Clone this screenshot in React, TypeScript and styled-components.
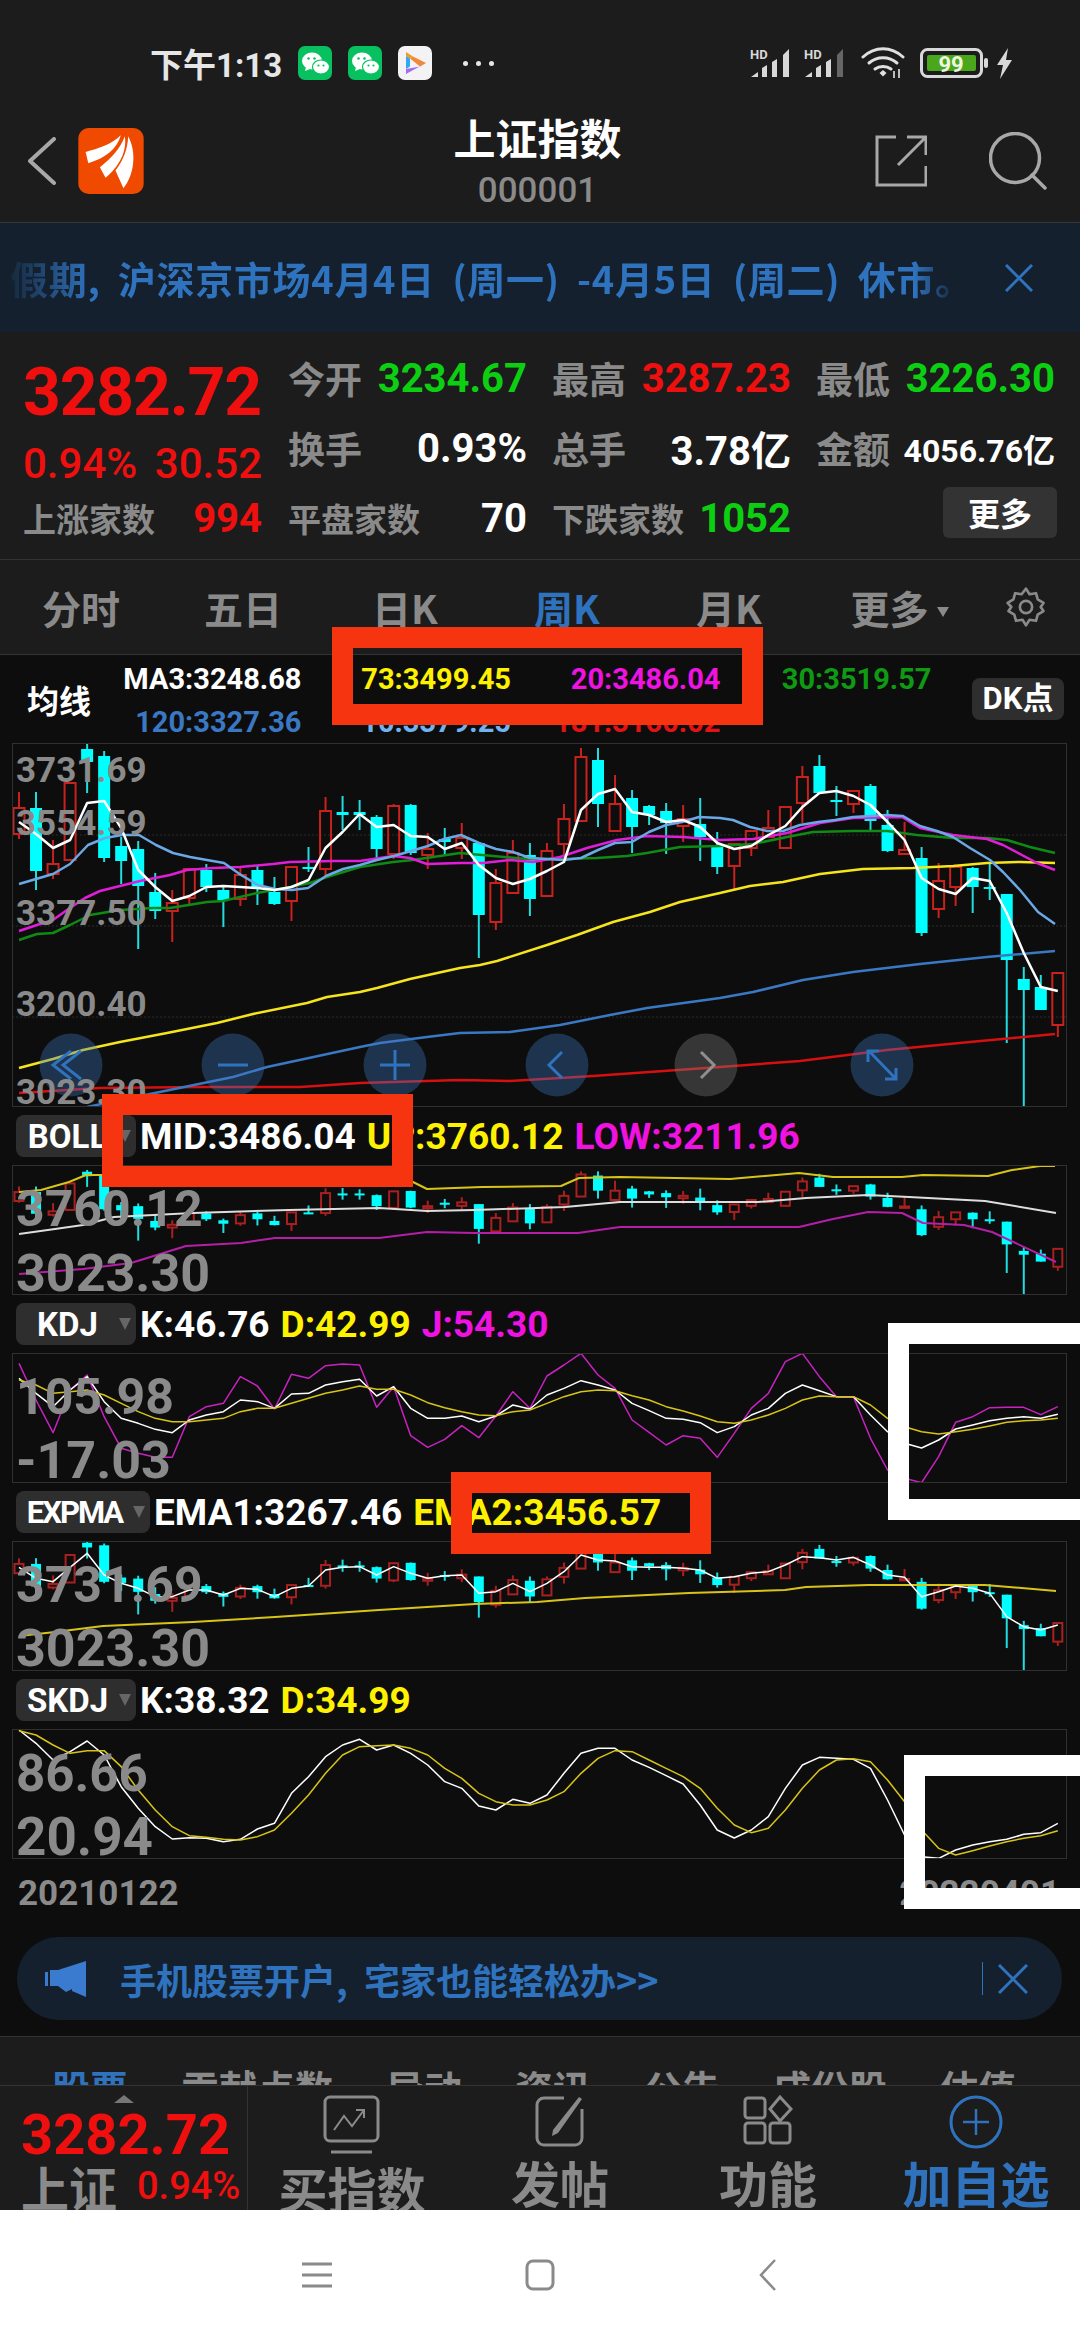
import React from 'react';
import styled, {createGlobalStyle} from 'styled-components';

const NUM = `Roboto, "Noto Sans CJK SC", sans-serif`;
const CJK = `"Noto Sans CJK SC", Roboto, sans-serif`;
const RED = '#f00f0f';
const GREEN = '#0ccf12';
const GRAY = '#8a8a8a';
const BLUE = '#2f72bd';
const YELLOW = '#fff200';
const MAGENTA = '#f012e0';

const GlobalStyle = createGlobalStyle`
  html, body { margin: 0; padding: 0; background: #fff; }
  * { box-sizing: border-box; }
`;

const Page = styled.div`
  position: relative;
  width: 1080px;
  height: 2340px;
  overflow: hidden;
  background: #1c1c1c;
  font-family: ${CJK};
`;

const StatusBar = styled.div`
  display: flex;
  align-items: center;
  height: 100px;
  padding: 26px 67px 0 150px;
`;
const Clock = styled.span`
  font: 700 33px ${NUM};
  color: #e6e6e6;
  width: 131px;
  white-space: nowrap;
  margin-right: 17px;
`;
const AppIcons = styled.div`
  display: flex;
  gap: 16px;
`;
const MoreDots = styled.div`
  display: flex;
  gap: 8px;
  margin-left: 31px;
  i {
    width: 5px;
    height: 5px;
    border-radius: 50%;
    background: #e6e6e6;
  }
`;
const SysIcons = styled.div`
  display: flex;
  align-items: center;
  margin-left: auto;
  gap: 13px;
`;

const NavBar = styled.div`
  display: grid;
  grid-template-columns: 1fr auto 1fr;
  align-items: center;
  height: 123px;
  padding: 0 33px 0 28px;
  border-bottom: 1px solid #34383c;
`;
const NavLeft = styled.div`
  display: flex;
  align-items: center;
  gap: 22px;
`;
const NavTitle = styled.div`
  display: flex;
  flex-direction: column;
  align-items: center;
`;
const TitleText = styled.div`
  font: 700 42px/52px ${CJK};
  color: #fff;
`;
const CodeText = styled.div`
  font: 500 35px/40px ${NUM};
  color: ${GRAY};
  margin-top: 8px;
`;
const NavRight = styled.div`
  display: flex;
  justify-content: flex-end;
  align-items: center;
  gap: 62px;
`;

const Notice = styled.div`
  display: flex;
  align-items: center;
  height: 109px;
  background: #14202e;
`;
const NoticeText = styled.div`
  flex: 1;
  min-width: 0;
  font: 700 38px ${CJK};
  letter-spacing: 0.7px;
  word-spacing: 8px;
  color: ${BLUE};
  white-space: nowrap;
  padding-left: 10px;
  mask-image: linear-gradient(90deg, transparent 0, #000 90px, #000 915px, transparent 960px);
`;
const NoticeClose = styled.div`
  flex: none;
  width: 122px;
  display: flex;
  justify-content: center;
`;

const Quote = styled.div`
  display: flex;
  height: 228px;
  padding-left: 23px;
  border-bottom: 1px solid #333;
`;
const PriceCol = styled.div`
  width: 239px;
  padding-top: 26px;
  margin-right: 26px;
`;
const BigPrice = styled.div`
  font: 700 66px/70px ${NUM};
  letter-spacing: -1.2px;
  color: ${RED};
  white-space: nowrap;
`;
const Change = styled.div`
  display: flex;
  justify-content: space-between;
  height: 55px;
  padding-top: 16px;
  font: 500 42px/39px ${NUM};
  color: ${RED};
`;
const StatGrid = styled.div`
  display: grid;
  grid-template-columns: repeat(3, 239px);
  grid-auto-rows: 70px;
  column-gap: 25px;
  padding-top: 11px;
`;
const Stat = styled.div`
  display: flex;
  align-items: center;
  justify-content: space-between;
  height: 70px;
`;
const StatLabel = styled.span<{$size?: number}>`
  font: 700 ${p => p.$size ?? 37}px ${CJK};
  color: ${GRAY};
  white-space: nowrap;
`;
const StatValue = styled.span<{$color?: string; $size?: number}>`
  font: 700 ${p => p.$size ?? 40}px ${NUM};
  color: ${p => p.$color ?? '#fff'};
  white-space: nowrap;
`;
const MoreButton = styled.div`
  position: absolute;
  left: 943px;
  top: 487px;
  width: 114px;
  height: 51px;
  border-radius: 6px;
  background: #333;
  color: #fff;
  font: 700 32px/51px ${CJK};
  text-align: center;
`;

const PeriodTabs = styled.div`
  display: flex;
  align-items: center;
  height: 95px;
  border-bottom: 1px solid #333;
`;
const PeriodTab = styled.div<{$active?: boolean}>`
  width: 162px;
  text-align: center;
  white-space: nowrap;
  font: 700 39px ${CJK};
  color: ${p => (p.$active ? BLUE : GRAY)};
`;
const MoreTab = styled(PeriodTab)`
  width: 195px;
  padding-right: 16px;
`;

const ChartArea = styled.div`
  background: #0d0d0d;
  height: 1381px;
`;
const MaLegend = styled.div`
  position: relative;
  display: flex;
  height: 88px;
  padding-left: 27px;
`;
const MaTitle = styled.div`
  width: 65px;
  align-self: center;
  font: 700 32px ${CJK};
  color: #fff;
  white-space: nowrap;
`;
const MaGrid = styled.div`
  display: grid;
  grid-template-columns: repeat(3, 209.5px) 211px;
  grid-auto-rows: 43px;
  padding-top: 3px;
`;
const MaValue = styled.div<{$color: string}>`
  font: 700 29px/43px ${NUM};
  color: ${p => p.$color};
  text-align: right;
  white-space: nowrap;
`;
const DkButton = styled.div`
  position: absolute;
  left: 972px;
  top: 23px;
  width: 92px;
  height: 42px;
  border-radius: 8px;
  background: #2e2e2e;
  color: #fff;
  font: 700 31px/42px ${NUM};
  text-align: center;
  white-space: nowrap;
`;

const Panel = styled.div<{$height: number}>`
  position: relative;
  margin: 0 13px 0 12px;
  height: ${p => p.$height}px;
  outline: 1px solid #303030;
  outline-offset: -1px;
  svg {
    display: block;
    width: 100%;
    height: 100%;
  }
`;
const AxisLabel = styled.span<{$center: number; $size: number}>`
  position: absolute;
  left: 4px;
  top: ${p => p.$center}px;
  transform: translateY(-50%);
  font: 700 ${p => p.$size}px ${NUM};
  color: #8a8a8a;
  white-space: nowrap;
`;

const IndicatorHeader = styled.div`
  display: flex;
  align-items: center;
  height: 58px;
  padding: 0 0 0 16px;
`;
const Chip = styled.div<{$wide?: boolean}>`
  display: flex;
  align-items: center;
  width: ${p => (p.$wide ? 134 : 120)}px;
  height: 42px;
  padding-right: 5px;
  margin-right: 4px;
  border-radius: 8px;
  background: #2e2e2e;
  color: #fff;
  &::after {
    content: '';
    flex: none;
    border-left: 6px solid transparent;
    border-right: 6px solid transparent;
    border-top: 12px solid #666;
  }
`;
const ChipText = styled.span<{$tight?: boolean}>`
  flex: 1;
  text-align: center;
  font: 700 ${p => (p.$tight ? 31 : 33)}px ${NUM};
  letter-spacing: ${p => (p.$tight ? -2 : 0)}px;
  white-space: nowrap;
`;
const Legend = styled.span<{$color: string}>`
  font: 700 37px ${NUM};
  color: ${p => p.$color};
  margin-right: 11px;
  white-space: nowrap;
`;

const DateRow = styled.div`
  display: flex;
  justify-content: space-between;
  align-items: center;
  height: 68px;
  padding: 0 20px 0 18px;
  font: 700 35px ${NUM};
  color: ${GRAY};
`;
const Promo = styled.div`
  display: flex;
  align-items: center;
  height: 83px;
  margin: 10px 18px 0 17px;
  padding: 0 34px 0 28px;
  border-radius: 42px;
  background: #14202e;
`;
const PromoText = styled.div`
  flex: 1;
  margin-left: 33px;
  font: 700 36px ${CJK};
  color: ${BLUE};
  white-space: pre;
`;
const PromoDivider = styled.div`
  width: 1px;
  height: 33px;
  background: ${BLUE};
  margin-right: 15px;
`;

const StockTabs = styled.div`
  display: flex;
  gap: 53px;
  height: 49px;
  padding: 30px 0 0 52px;
  overflow: hidden;
  border-top: 1px solid #333;
`;
const StockTab = styled.div<{$active?: boolean}>`
  font: 700 38px/40px ${CJK};
  color: ${p => (p.$active ? BLUE : GRAY)};
  white-space: nowrap;
`;

const BottomBar = styled.div`
  display: flex;
  height: 125px;
  overflow: hidden;
  border-top: 1px solid #333;
  background: #1c1c1c;
`;
const IndexCell = styled.div`
  position: relative;
  width: 248px;
  padding: 26px 0 0 21px;
  border-right: 1px solid #333;
`;
const UpMark = styled.i`
  position: absolute;
  left: 114px;
  top: 9px;
  border-left: 10px solid transparent;
  border-right: 10px solid transparent;
  border-bottom: 8px solid #777;
`;
const IndexPrice = styled.div`
  font: 700 56px/46px ${NUM};
  color: ${RED};
  white-space: nowrap;
`;
const IndexRow = styled.div`
  display: flex;
  align-items: center;
  gap: 20px;
  white-space: nowrap;
  margin-top: 2px;
`;
const IndexName = styled.span`
  font: 700 48px/52px ${CJK};
  color: ${GRAY};
`;
const IndexPct = styled.span`
  font: 500 38px ${NUM};
  color: ${RED};
`;
const ActionItem = styled.div<{$active?: boolean}>`
  width: 208px;
  display: flex;
  flex-direction: column;
  align-items: center;
  color: ${p => (p.$active ? BLUE : GRAY)};
`;
const ActionIcon = styled.div`
  height: 79px;
  padding-top: 9px;
`;
const ActionLabel = styled.div`
  font: 700 49px/56px ${CJK};
  white-space: nowrap;
`;

const SystemNav = styled.div`
  display: flex;
  align-items: center;
  gap: 193px;
  height: 130px;
  padding-left: 302px;
  background: #fff;
  svg:last-child {
    margin-left: 11px;
  }
`;

const Annotation = styled.div<{$x: number; $y: number; $w: number; $h: number; $color: string}>`
  position: absolute;
  left: ${p => p.$x}px;
  top: ${p => p.$y}px;
  width: ${p => p.$w}px;
  height: ${p => p.$h}px;
  border: 21px solid ${p => p.$color};
`;

// [bodyTop, bodyBottom, wickTop, wickBottom, up] in main-chart page coordinates
type Candle = [number, number, number, number, 0 | 1];
const CANDLES: Candle[] = [
  [808, 834, 792, 839, 1], [808, 871, 792, 890, 0], [864, 874, 840, 879, 1], [783, 860, 783, 860, 1],
  [749, 762, 744, 793, 0], [756, 858, 751, 862, 0], [846, 861, 837, 884, 0], [849, 886, 841, 949, 0],
  [892, 911, 873, 919, 0], [903, 911, 890, 942, 1], [869, 898, 869, 906, 1], [870, 887, 864, 892, 0],
  [890, 900, 885, 927, 0], [875, 899, 866, 906, 1], [870, 887, 866, 905, 0], [892, 904, 877, 905, 0],
  [867, 901, 867, 921, 1], [867, 869, 847, 872, 0], [811, 869, 797, 877, 1], [812, 815, 796, 830, 0],
  [812, 815, 800, 830, 0], [817, 849, 815, 860, 0], [806, 854, 804, 859, 1], [805, 853, 804, 855, 0],
  [849, 855, 833, 869, 1], [839, 842, 828, 855, 0], [838, 848, 823, 859, 1], [843, 915, 843, 958, 0],
  [883, 922, 869, 930, 1], [853, 893, 840, 893, 1], [855, 899, 843, 916, 0], [851, 896, 843, 896, 1],
  [819, 844, 804, 863, 1], [757, 821, 748, 821, 1], [760, 804, 748, 827, 0], [804, 831, 775, 831, 1],
  [798, 827, 790, 853, 0], [806, 815, 805, 825, 0], [811, 823, 803, 854, 0], [819, 826, 805, 842, 1],
  [824, 837, 798, 861, 0], [846, 867, 832, 874, 0], [844, 866, 844, 889, 1], [831, 848, 831, 856, 1],
  [828, 837, 810, 838, 1], [807, 848, 807, 848, 1], [777, 803, 766, 823, 1], [766, 793, 755, 793, 0],
  [800, 802, 786, 816, 0], [791, 804, 790, 813, 1], [786, 821, 784, 830, 0], [825, 851, 810, 852, 0],
  [850, 854, 822, 855, 1], [858, 933, 847, 936, 0], [881, 909, 863, 918, 1], [867, 887, 867, 906, 1],
  [868, 887, 867, 913, 0], [887, 889, 864, 900, 0], [894, 960, 894, 1043, 0], [979, 990, 967, 1107, 0],
  [987, 1010, 975, 1010, 0], [973, 1025, 972, 1037, 1],
];
const xAt = (i: number) => 19 + i * 17.03;

type P = [number, number];
const MA3 = [822, 834, 848, 840, 803, 801, 828, 870, 887, 901, 896, 887, 886, 887, 888, 890, 887, 880, 848, 832, 814, 827, 825, 836, 837, 849, 843, 865, 878, 884, 879, 871, 862, 810, 794, 789, 812, 815, 822, 820, 827, 843, 849, 846, 835, 826, 807, 793, 791, 796, 805, 822, 840, 878, 889, 894, 878, 881, 913, 953, 987, 991];
const MA10: P[] = [[19, 884], [53, 874], [70, 864], [88, 845], [105, 838], [122, 835], [139, 835], [156, 845], [173, 853], [190, 857], [207, 860], [224, 863], [241, 875], [258, 885], [275, 889], [292, 890], [308, 888], [326, 876], [343, 869], [360, 865], [377, 860], [394, 856], [411, 851], [428, 846], [444, 839], [461, 835], [479, 843], [496, 849], [513, 852], [530, 858], [547, 859], [564, 860], [581, 858], [598, 850], [615, 843], [632, 842], [649, 832], [666, 825], [682, 822], [699, 817], [720, 818], [733, 820], [750, 827], [767, 831], [783, 831], [800, 825], [818, 822], [835, 820], [853, 817], [887, 815], [903, 816], [920, 826], [937, 831], [953, 837], [970, 848], [990, 860], [1003, 872], [1020, 890], [1038, 912], [1055, 924]];
const MA20: P[] = [[19, 931], [37, 925], [53, 920], [67, 910], [85, 898], [100, 891], [120, 886], [140, 881], [170, 875], [187, 870], [213, 868], [240, 867], [273, 864], [290, 862], [333, 861], [360, 861], [393, 856], [410, 858], [427, 864], [460, 863], [483, 863], [510, 860], [533, 862], [560, 857], [587, 848], [617, 840], [647, 836], [683, 837], [720, 840], [753, 839], [787, 833], [820, 823], [853, 818], [902, 817], [920, 828], [953, 835], [987, 839], [1003, 845], [1037, 863], [1055, 870]];
const MA30: P[] = [[19, 940], [37, 934], [53, 933], [70, 925], [90, 915], [120, 910], [153, 908], [170, 908], [207, 902], [223, 901], [257, 893], [290, 887], [310, 883], [327, 877], [360, 867], [393, 862], [413, 860], [460, 853], [493, 856], [527, 859], [560, 859], [597, 858], [627, 856], [647, 853], [680, 847], [720, 846], [753, 844], [787, 837], [813, 832], [853, 831], [887, 831], [917, 835], [953, 838], [987, 838], [1007, 840], [1030, 847], [1055, 853]];
const MA73: P[] = [[19, 1068], [53, 1059], [83, 1050], [120, 1042], [167, 1033], [217, 1023], [253, 1014], [307, 1003], [327, 997], [360, 992], [377, 988], [410, 979], [460, 968], [480, 965], [497, 961], [547, 945], [577, 935], [613, 922], [650, 912], [680, 902], [720, 893], [750, 886], [783, 882], [820, 874], [863, 869], [913, 868], [953, 866], [987, 863], [1020, 862], [1055, 863]];
const MA120: P[] = [[87, 1107], [150, 1094], [233, 1077], [267, 1067], [360, 1047], [380, 1043], [427, 1037], [460, 1033], [510, 1032], [560, 1025], [610, 1015], [647, 1008], [720, 998], [753, 992], [803, 980], [853, 972], [920, 964], [987, 957], [1055, 951]];
const MA181: P[] = [[19, 1093], [100, 1088], [200, 1087], [300, 1087], [360, 1083], [460, 1080], [510, 1081], [593, 1076], [720, 1067], [800, 1061], [887, 1050], [970, 1042], [1055, 1034]];

const BOLL_UP: P[] = [[19, 1192], [41, 1190], [69, 1182], [86, 1175], [103, 1175], [200, 1180], [300, 1182], [413, 1182], [427, 1189], [482, 1187], [561, 1186], [579, 1178], [620, 1177], [730, 1179], [799, 1173], [833, 1177], [902, 1177], [923, 1175], [988, 1176], [1012, 1170], [1040, 1166], [1055, 1166]];
const BOLL_MID: P[] = [[19, 1234], [55, 1229], [83, 1225], [114, 1217], [193, 1213], [289, 1210], [379, 1208], [427, 1211], [475, 1210], [565, 1207], [620, 1202], [702, 1202], [758, 1202], [806, 1198], [868, 1195], [909, 1197], [985, 1201], [1056, 1213]];
const BOLL_LOW: P[] = [[19, 1274], [83, 1269], [131, 1263], [186, 1246], [241, 1243], [275, 1238], [379, 1238], [427, 1232], [475, 1233], [578, 1233], [620, 1227], [799, 1227], [833, 1219], [868, 1212], [902, 1213], [923, 1223], [964, 1225], [992, 1232], [1056, 1262]];

// oscillators: one value per candle, measured from the top of their strip
const KDJ_K = [805, 850, 890, 840, 800, 875, 925, 940, 958, 968, 930, 915, 905, 870, 875, 895, 852, 850, 825, 815, 808, 858, 830, 895, 925, 925, 918, 935, 918, 885, 897, 855, 835, 812, 825, 840, 880, 902, 925, 928, 938, 968, 950, 915, 895, 850, 825, 842, 860, 860, 915, 965, 1000, 1014, 990, 957, 945, 932, 925, 920, 925, 913];
const KDJ_D = [810, 825, 850, 845, 840, 855, 880, 905, 925, 935, 935, 930, 925, 905, 895, 895, 880, 865, 850, 840, 828, 838, 838, 855, 878, 893, 905, 915, 917, 905, 900, 880, 860, 845, 840, 842, 857, 870, 890, 903, 918, 935, 940, 930, 915, 895, 870, 858, 860, 860, 885, 925, 950, 965, 972, 965, 958, 948, 937, 932, 930, 925];
const KDJ_J = [760, 870, 968, 840, 795, 920, 1015, 1030, 1042, 1042, 920, 890, 880, 800, 828, 897, 793, 805, 767, 762, 765, 892, 830, 977, 1012, 988, 947, 983, 918, 845, 895, 798, 765, 730, 795, 835, 930, 967, 1005, 977, 985, 1042, 970, 895, 850, 755, 730, 800, 860, 860, 985, 1080, 1105, 1118, 1040, 937, 920, 893, 892, 892, 914, 890];
const EMA1 = [262, 295, 305, 262, 220, 285, 310, 325, 350, 350, 330, 330, 345, 325, 328, 350, 325, 318, 270, 262, 260, 285, 260, 280, 295, 287, 285, 340, 335, 310, 335, 310, 275, 225, 240, 243, 260, 262, 262, 265, 270, 295, 290, 280, 275, 255, 230, 233, 240, 232, 255, 285, 292, 350, 335, 318, 325, 340, 410, 440, 450, 435];
const EMA2: P[] = [[19, 1636], [55, 1632], [103, 1626], [193, 1622], [275, 1617], [379, 1610], [475, 1604], [537, 1602], [585, 1598], [689, 1593], [785, 1590], [806, 1587], [868, 1585], [923, 1585], [985, 1585], [1056, 1591]];
const SKDJ_K = [750, 790, 840, 815, 783, 825, 920, 985, 1040, 1077, 1073, 1075, 1085, 1078, 1047, 1030, 940, 890, 830, 795, 778, 810, 795, 820, 855, 905, 925, 978, 990, 958, 970, 945, 880, 820, 805, 805, 840, 862, 887, 912, 975, 1050, 1074, 1050, 1010, 925, 855, 832, 835, 838, 865, 960, 1065, 1130, 1135, 1110, 1095, 1085, 1078, 1063, 1058, 1030];
const SKDJ_D = [752, 765, 795, 820, 812, 812, 860, 930, 990, 1040, 1067, 1072, 1078, 1080, 1070, 1050, 1000, 945, 880, 825, 800, 797, 795, 805, 825, 865, 895, 940, 965, 975, 975, 960, 935, 880, 835, 812, 815, 840, 865, 890, 925, 985, 1035, 1058, 1045, 990, 925, 870, 840, 836, 845, 900, 965, 1050, 1105, 1125, 1112, 1098, 1085, 1075, 1067, 1052];

const series = (vals: number[], map: (v: number) => number): P[] => vals.map((v, i) => [xAt(i), map(v)]);
const Line = ({pts, color, w = 2}: {pts: P[]; color: string; w?: number}) => (
  <polyline points={pts.map(p => p.join(',')).join(' ')} fill="none" stroke={color} strokeWidth={w} strokeLinejoin="round" />
);

const Candles = ({map, red, wide = 6, thin = 2}: {map: (y: number) => number; red: string; wide?: number; thin?: number}) => (
  <>
    {CANDLES.map(([t, b, wt, wb, up], i) => {
      const x = xAt(i);
      const top = map(t);
      const bot = map(b);
      const color = up ? red : '#00ffff';
      return (
        <g key={i}>
          <line x1={x} x2={x} y1={map(wt)} y2={up ? top : map(wb)} stroke={up ? red : '#20dde0'} strokeWidth={thin} />
          {up ? <line x1={x} x2={x} y1={bot} y2={map(wb)} stroke={red} strokeWidth={thin} /> : null}
          {up ? (
            <rect x={x - wide + 0.5} y={top} width={wide * 2 - 1} height={Math.max(bot - top, 1)} fill="none" stroke={color} strokeWidth={thin} />
          ) : (
            <rect x={x - wide} y={top} width={wide * 2} height={Math.max(bot - top, 2)} fill={color} />
          )}
        </g>
      );
    })}
  </>
);

const ChartSvg = ({top, h, children}: {top: number; h: number; children: React.ReactNode}) => (
  <svg viewBox={`12 ${top} 1055 ${h}`} preserveAspectRatio="none">
    {children}
  </svg>
);

const RoundButton = ({cx, gray, children}: {cx: number; gray?: boolean; children: React.ReactNode}) => (
  <g transform={`translate(${cx} 1065)`}>
    <circle r={31.5} fill={gray ? 'rgba(120,120,120,.38)' : 'rgba(60,120,190,.36)'} />
    <g fill="none" stroke={gray ? '#8f8f8f' : BLUE} strokeWidth={3}>
      {children}
    </g>
  </g>
);

const WeChat = () => (
  <svg width={34} height={34} viewBox="0 0 34 34">
    <rect width={34} height={34} rx={7} fill="#07c160" />
    <ellipse cx={14} cy={15} rx={10} ry={8.5} fill="#fff" />
    <path d="M8 21l-1 4 5-2z" fill="#fff" />
    <ellipse cx={23} cy={21} rx={8.5} ry={7} fill="#fff" stroke="#07c160" strokeWidth={1.2} />
    <circle cx={10.5} cy={12.5} r={1.3} fill="#07c160" />
    <circle cx={16.5} cy={12.5} r={1.3} fill="#07c160" />
    <circle cx={20.5} cy={19.5} r={1.1} fill="#07c160" />
    <circle cx={25.5} cy={19.5} r={1.1} fill="#07c160" />
  </svg>
);

const PlayApp = () => (
  <svg width={34} height={34} viewBox="0 0 34 34">
    <rect width={34} height={34} rx={7} fill="#f3f3f6" />
    <path d="M8 6l7 4.5-3 2-4-2.5z" fill="#f59a23" />
    <path d="M8 10l4 2.5v8L8 23z" fill="#35a7f0" />
    <path d="M15 10.5L28 17l-6 3.5-10-8z" fill="#f08a3a" />
    <path d="M28 17L8 28v-5l14-2.5z" fill="#a66cf0" />
  </svg>
);

const Signal = ({faded}: {faded?: boolean}) => (
  <svg width={41} height={30} viewBox="0 0 41 30">
    <text x={0} y={11} fontFamily="Roboto" fontWeight={700} fontSize={13} fill="#d8d8d8">HD</text>
    <path d="M1 29l7-5v5z" fill="#d8d8d8" />
    <path d="M12 29v-9l5-3v12z" fill="#d8d8d8" />
    <path d="M22 29V14l5-3v18z" fill="#d8d8d8" />
    <path d="M33 29V7l6-6v28z" fill={faded ? '#666' : '#d8d8d8'} />
  </svg>
);

const StatusIcons = () => (
  <SysIcons>
    <Signal />
    <Signal faded />
    <svg width={44} height={32} viewBox="0 0 44 32" style={{marginLeft: 3}}>
      <g fill="none" stroke="#e0e0e0" strokeWidth={3} strokeLinecap="round">
        <path d="M2 10c12-11 28-11 40 0" />
        <path d="M8 16c8-7 20-7 28 0" />
        <path d="M14 22c4.500-3.500 11.500-3.500 16 0" />
      </g>
      <path d="M18.500 26l3.500-3 3.500 3-3.500 3.500z" fill="#e0e0e0" />
      <path d="M33 24v7M38 22v9" stroke="#bdbdbd" strokeWidth={2} />
    </svg>
    <svg width={68} height={30} viewBox="0 0 68 30" style={{marginLeft: 2}}>
      <rect x={1.500} y={1.500} width={60} height={27} rx={6} fill="none" stroke="#d8d8d8" strokeWidth={3} />
      <rect x={7} y={7} width={49} height={16} rx={2} fill="#4aa61a" />
      <rect x={64} y={10} width={4} height={10} rx={2} fill="#d8d8d8" />
      <text x={31} y={24} textAnchor="middle" fontFamily="Roboto" fontWeight={700} fontSize={22} fill="#eef6e0">99</text>
    </svg>
    <svg width={17} height={31} viewBox="0 0 17 31" style={{marginLeft: -5}}>
      <path d="M12 0L1 17h6l-3 14L16 12h-6z" fill="#d8d8d8" />
    </svg>
  </SysIcons>
);

const IconX = ({w, h, color, sw = 3}: {w: number; h: number; color: string; sw?: number}) => (
  <svg width={w} height={h} viewBox={`0 0 ${w} ${h}`}>
    <path d={`M1 1L${w - 1} ${h - 1}M${w - 1} 1L1 ${h - 1}`} stroke={color} strokeWidth={sw} fill="none" />
  </svg>
);

const Annotations = () => (
  <>
    <Annotation $x={332} $y={627} $w={431} $h={98} $color="#f63510" />
    <Annotation $x={102} $y={1094} $w={311} $h={93} $color="#f63510" />
    <Annotation $x={451} $y={1472} $w={260} $h={82} $color="#f63510" />
    <Annotation $x={888} $y={1323} $w={222} $h={197} $color="#fff" />
    <Annotation $x={904} $y={1755} $w={206} $h={154} $color="#fff" />
  </>
);

export default function App() {
  const emaMap = (y: number) => 1541 + (y - 744) * 0.3581;
  const bollMap = (y: number) => 1295 - (1107 - y) * 0.3443;
  return (
    <Page>
      <GlobalStyle />
      <StatusBar>
        <Clock>下午1:13</Clock>
        <AppIcons>
          <WeChat />
          <WeChat />
          <PlayApp />
        </AppIcons>
        <MoreDots>
          <i />
          <i />
          <i />
        </MoreDots>
        <StatusIcons />
      </StatusBar>

      <NavBar>
        <NavLeft>
          <svg width={28} height={48} viewBox="0 0 28 48">
            <path d="M26 2L2 24l24 22" fill="none" stroke="#a8a8a8" strokeWidth={4} strokeLinecap="round" strokeLinejoin="round" />
          </svg>
          <svg width={66} height={66} viewBox="0 0 197 199">
            <rect width={197} height={199} rx={32} fill="#f04a00" />
            <path d="M22 72C60 62 100 50 128 22 118 62 80 92 30 106z" fill="#fff" />
            <path d="M65 118C100 92 128 60 140 25 148 70 122 118 82 150z" fill="#fff" />
            <path d="M112 128C135 100 150 60 150 25 176 70 170 140 136 182z" fill="#fff" />
          </svg>
        </NavLeft>
        <NavTitle>
          <TitleText>上证指数</TitleText>
          <CodeText>000001</CodeText>
        </NavTitle>
        <NavRight>
          <svg width={52} height={52} viewBox="0 0 52 52">
            <path d="M21 2H2v48h49V31M51 20V2H32M51 2L23 30" fill="none" stroke="#a8a8a8" strokeWidth={3} />
          </svg>
          <svg width={58} height={58} viewBox="0 0 58 58">
            <circle cx={26} cy={26} r={24.500} fill="none" stroke="#a8a8a8" strokeWidth={3.500} />
            <path d="M43 43l13 13" stroke="#a8a8a8" strokeWidth={3.500} strokeLinecap="round" />
          </svg>
        </NavRight>
      </NavBar>

      <Notice>
        <NoticeText>假期, 沪深京市场4月4日 (周一) -4月5日 (周二) 休市。</NoticeText>
        <NoticeClose>
          <IconX w={28} h={28} color={BLUE} />
        </NoticeClose>
      </Notice>

      <Quote>
        <PriceCol>
          <BigPrice>3282.72</BigPrice>
          <Change>
            <span>0.94%</span>
            <span>30.52</span>
          </Change>
          <Stat>
            <StatLabel $size={33}>上涨家数</StatLabel>
            <StatValue $color={RED}>994</StatValue>
          </Stat>
        </PriceCol>
        <StatGrid>
          <Stat>
            <StatLabel>今开</StatLabel>
            <StatValue $color={GREEN}>3234.67</StatValue>
          </Stat>
          <Stat>
            <StatLabel>最高</StatLabel>
            <StatValue $color={RED}>3287.23</StatValue>
          </Stat>
          <Stat>
            <StatLabel>最低</StatLabel>
            <StatValue $color={GREEN}>3226.30</StatValue>
          </Stat>
          <Stat>
            <StatLabel>换手</StatLabel>
            <StatValue>0.93%</StatValue>
          </Stat>
          <Stat>
            <StatLabel>总手</StatLabel>
            <StatValue>3.78亿</StatValue>
          </Stat>
          <Stat>
            <StatLabel>金额</StatLabel>
            <StatValue $size={32}>4056.76亿</StatValue>
          </Stat>
          <Stat>
            <StatLabel $size={33}>平盘家数</StatLabel>
            <StatValue>70</StatValue>
          </Stat>
          <Stat>
            <StatLabel $size={33}>下跌家数</StatLabel>
            <StatValue $color={GREEN}>1052</StatValue>
          </Stat>
        </StatGrid>
        <MoreButton>更多</MoreButton>
      </Quote>

      <PeriodTabs>
        <PeriodTab>分时</PeriodTab>
        <PeriodTab>五日</PeriodTab>
        <PeriodTab>日K</PeriodTab>
        <PeriodTab $active>周K</PeriodTab>
        <PeriodTab>月K</PeriodTab>
        <MoreTab>
          更多
          <svg width={12} height={12} viewBox="0 0 12 12" style={{marginLeft: 8, marginBottom: 6}}>
            <path d="M0 1h12L6 11z" fill={GRAY} />
          </svg>
        </MoreTab>
        <svg width={42} height={44} viewBox="0 0 24 24" fill="none" stroke={GRAY} strokeWidth={1.500} strokeLinejoin="round">
          <path d="M12 1.500l2 3.200 3.700-.6 1 3.600 3.300 2-1.600 2.300 1.600 2.300-3.300 2-1 3.600-3.700-.6-2 3.200-2-3.200-3.700.6-1-3.600-3.300-2 1.600-2.300L1.500 9.700l3.300-2 1-3.600 3.700.6z" />
          <circle cx={12} cy={12} r={3.500} />
        </svg>
      </PeriodTabs>

      <ChartArea>
        <MaLegend>
          <MaTitle>均线</MaTitle>
          <MaGrid>
            <MaValue $color="#fff">MA3:3248.68</MaValue>
            <MaValue $color={YELLOW}>73:3499.45</MaValue>
            <MaValue $color={MAGENTA}>20:3486.04</MaValue>
            <MaValue $color="#0f9a14">30:3519.57</MaValue>
            <MaValue $color="#3a78c4">120:3327.36</MaValue>
            <MaValue $color="#6fb4f0">10:3379.25</MaValue>
            <MaValue $color="#e01414">181:3160.02</MaValue>
          </MaGrid>
          <DkButton>DK点</DkButton>
        </MaLegend>

        <Panel $height={364}>
          <ChartSvg top={743} h={364}>
            {[835, 926, 1017].map(y => (
              <line key={y} x1={12} x2={1067} y1={y} y2={y} stroke="#2c2c2c" strokeWidth={1} strokeDasharray="2 2" />
            ))}
            <Candles map={y => y} red="#c8211e" />
            <Line pts={MA181} color="#d61010" w={2.500} />
            <Line pts={MA120} color="#3a78c4" w={2.500} />
            <Line pts={MA73} color="#f6e51c" w={2.500} />
            <Line pts={MA30} color="#0f8a14" w={2.500} />
            <Line pts={MA20} color="#e01ed8" w={2.500} />
            <Line pts={MA10} color="#6aa9e6" w={2.500} />
            <Line pts={series(MA3, v => v)} color="#fff" w={2.500} />
            <RoundButton cx={71}>
              <path d="M10-14L-8 0l18 14M0-14l-18 14 18 14" />
            </RoundButton>
            <RoundButton cx={233}>
              <path d="M-15 0h30" />
            </RoundButton>
            <RoundButton cx={395}>
              <path d="M-15 0h30M0-15v30" />
            </RoundButton>
            <RoundButton cx={557}>
              <path d="M5-13L-8 0 5 13" />
            </RoundButton>
            <RoundButton cx={706} gray>
              <path d="M-5-13L8 0-5 13" />
            </RoundButton>
            <RoundButton cx={882}>
              <path d="M-13-14L14 14M-14-3v-11h11M14 3v11H3" />
            </RoundButton>
          </ChartSvg>
          <AxisLabel $size={35} $center={27}>3731.69</AxisLabel>
          <AxisLabel $size={35} $center={80}>3554.59</AxisLabel>
          <AxisLabel $size={35} $center={170}>3377.50</AxisLabel>
          <AxisLabel $size={35} $center={261}>3200.40</AxisLabel>
          <AxisLabel $size={35} $center={349}>3023.30</AxisLabel>
        </Panel>

        <IndicatorHeader>
          <Chip>
            <ChipText>BOLL</ChipText>
          </Chip>
          <Legend $color="#fff">MID:3486.04</Legend>
          <Legend $color={YELLOW}>UP:3760.12</Legend>
          <Legend $color={MAGENTA}>LOW:3211.96</Legend>
        </IndicatorHeader>
        <Panel $height={130}>
          <ChartSvg top={1165} h={130}>
            <Candles map={bollMap} red="#a82020" wide={5} />
            <Line pts={BOLL_UP} color="#d8c418" />
            <Line pts={BOLL_MID} color="#ddd" />
            <Line pts={BOLL_LOW} color="#b51fa8" />
          </ChartSvg>
          <AxisLabel $size={50} $center={44}>3760.12</AxisLabel>
          <AxisLabel $size={52} $center={108}>3023.30</AxisLabel>
        </Panel>

        <IndicatorHeader>
          <Chip>
            <ChipText>KDJ</ChipText>
          </Chip>
          <Legend $color="#fff">K:46.76</Legend>
          <Legend $color={YELLOW}>D:42.99</Legend>
          <Legend $color={MAGENTA}>J:54.30</Legend>
        </IndicatorHeader>
        <Panel $height={130}>
          <ChartSvg top={1353} h={130}>
            <Line pts={series(KDJ_J, v => 1110 + v / 3)} color="#c822c0" w={1.500} />
            <Line pts={series(KDJ_K, v => 1110 + v / 3)} color="#fff" w={1.500} />
            <Line pts={series(KDJ_D, v => 1110 + v / 3)} color="#d8c418" w={1.500} />
          </ChartSvg>
          <AxisLabel $size={50} $center={44}>105.98</AxisLabel>
          <AxisLabel $size={52} $center={107}>-17.03</AxisLabel>
        </Panel>

        <IndicatorHeader>
          <Chip $wide>
            <ChipText $tight>EXPMA</ChipText>
          </Chip>
          <Legend $color="#fff">EMA1:3267.46</Legend>
          <Legend $color={YELLOW}>EMA2:3456.57</Legend>
        </IndicatorHeader>
        <Panel $height={130}>
          <ChartSvg top={1541} h={130}>
            <Candles map={emaMap} red="#a82020" wide={5} />
            <Line pts={EMA2} color="#d8c418" />
            <Line pts={series(EMA1, v => 1480 + v / 3)} color="#fff" w={1.500} />
          </ChartSvg>
          <AxisLabel $size={50} $center={44}>3731.69</AxisLabel>
          <AxisLabel $size={52} $center={107}>3023.30</AxisLabel>
        </Panel>

        <IndicatorHeader>
          <Chip>
            <ChipText>SKDJ</ChipText>
          </Chip>
          <Legend $color="#fff">K:38.32</Legend>
          <Legend $color={YELLOW}>D:34.99</Legend>
        </IndicatorHeader>
        <Panel $height={130}>
          <ChartSvg top={1729} h={130}>
            <Line pts={series(SKDJ_K, v => 1480 + v / 3)} color="#fff" w={1.500} />
            <Line pts={series(SKDJ_D, v => 1480 + v / 3)} color="#d8c418" w={1.500} />
          </ChartSvg>
          <AxisLabel $size={51} $center={44}>86.66</AxisLabel>
          <AxisLabel $size={53} $center={108}>20.94</AxisLabel>
        </Panel>

        <DateRow>
          <span>20210122</span>
          <span>20220401</span>
        </DateRow>
        <Promo>
          <svg width={42} height={36} viewBox="0 0 42 36">
            <path d="M0 11h3v14H0zM5 9h8L41 0v36L27 30v-2l-6 3-8-6H5z" fill="#3a7bd0" />
          </svg>
          <PromoText>手机股票开户,  宅家也能轻松办&gt;&gt;</PromoText>
          <PromoDivider />
          <IconX w={30} h={30} color={BLUE} />
        </Promo>
      </ChartArea>

      <StockTabs>
        <StockTab $active>股票</StockTab>
        <StockTab>贡献点数</StockTab>
        <StockTab>异动</StockTab>
        <StockTab>资讯</StockTab>
        <StockTab>公告</StockTab>
        <StockTab>成份股</StockTab>
        <StockTab>估值</StockTab>
      </StockTabs>

      <BottomBar>
        <IndexCell>
          <UpMark />
          <IndexPrice>3282.72</IndexPrice>
          <IndexRow>
            <IndexName>上证</IndexName>
            <IndexPct>0.94%</IndexPct>
          </IndexRow>
        </IndexCell>
        <ActionItem>
          <ActionIcon>
            <svg width={58} height={60} viewBox="0 0 58 60" fill="none" stroke="currentColor" strokeWidth={3}>
              <rect x={2} y={2} width={53} height={44} rx={5} />
              <path d="M8 57h41" />
              <path d="M11 35l10-14 8 10 12-16m-8 0h8v8" strokeWidth={2} />
            </svg>
          </ActionIcon>
          <ActionLabel>买指数</ActionLabel>
        </ActionItem>
        <ActionItem>
          <ActionIcon>
            <svg width={52} height={54} viewBox="0 0 52 54" fill="none" stroke="currentColor" strokeWidth={3}>
              <path d="M30 3H10a7 7 0 0 0-7 7v33a7 7 0 0 0 7 7h31a7 7 0 0 0 7-7V14" />
              <path d="M19 35L45 2l3 2-24 34-6 3z" fill="currentColor" stroke="none" />
            </svg>
          </ActionIcon>
          <ActionLabel>发帖</ActionLabel>
        </ActionItem>
        <ActionItem>
          <ActionIcon>
            <svg width={50} height={50} viewBox="0 0 50 50" fill="none" stroke="currentColor" strokeWidth={3}>
              <rect x={2} y={3} width={20} height={20} rx={3} />
              <rect x={2} y={28} width={20} height={20} rx={3} />
              <rect x={27} y={28} width={20} height={20} rx={3} />
              <path d="M37 2l11 12-11 12-10-12z" />
            </svg>
          </ActionIcon>
          <ActionLabel>功能</ActionLabel>
        </ActionItem>
        <ActionItem $active>
          <ActionIcon>
            <svg width={54} height={54} viewBox="0 0 54 54" fill="none" stroke="currentColor" strokeWidth={3}>
              <circle cx={27} cy={27} r={25} />
              <path d="M27 14v26M14 27h26" strokeWidth={2.500} />
            </svg>
          </ActionIcon>
          <ActionLabel>加自选</ActionLabel>
        </ActionItem>
      </BottomBar>

      <SystemNav>
        <svg width={30} height={26} viewBox="0 0 30 26">
          <path d="M0 2h30M0 13h30M0 24h30" stroke="#8a8a8a" strokeWidth={3} />
        </svg>
        <svg width={30} height={32} viewBox="0 0 30 32">
          <rect x={2} y={2} width={26} height={28} rx={6} fill="none" stroke="#8a8a8a" strokeWidth={3} />
        </svg>
        <svg width={18} height={32} viewBox="0 0 18 32">
          <path d="M16 1L2 16l14 15" fill="none" stroke="#8a8a8a" strokeWidth={2.500} />
        </svg>
      </SystemNav>

      <Annotations />
    </Page>
  );
}
